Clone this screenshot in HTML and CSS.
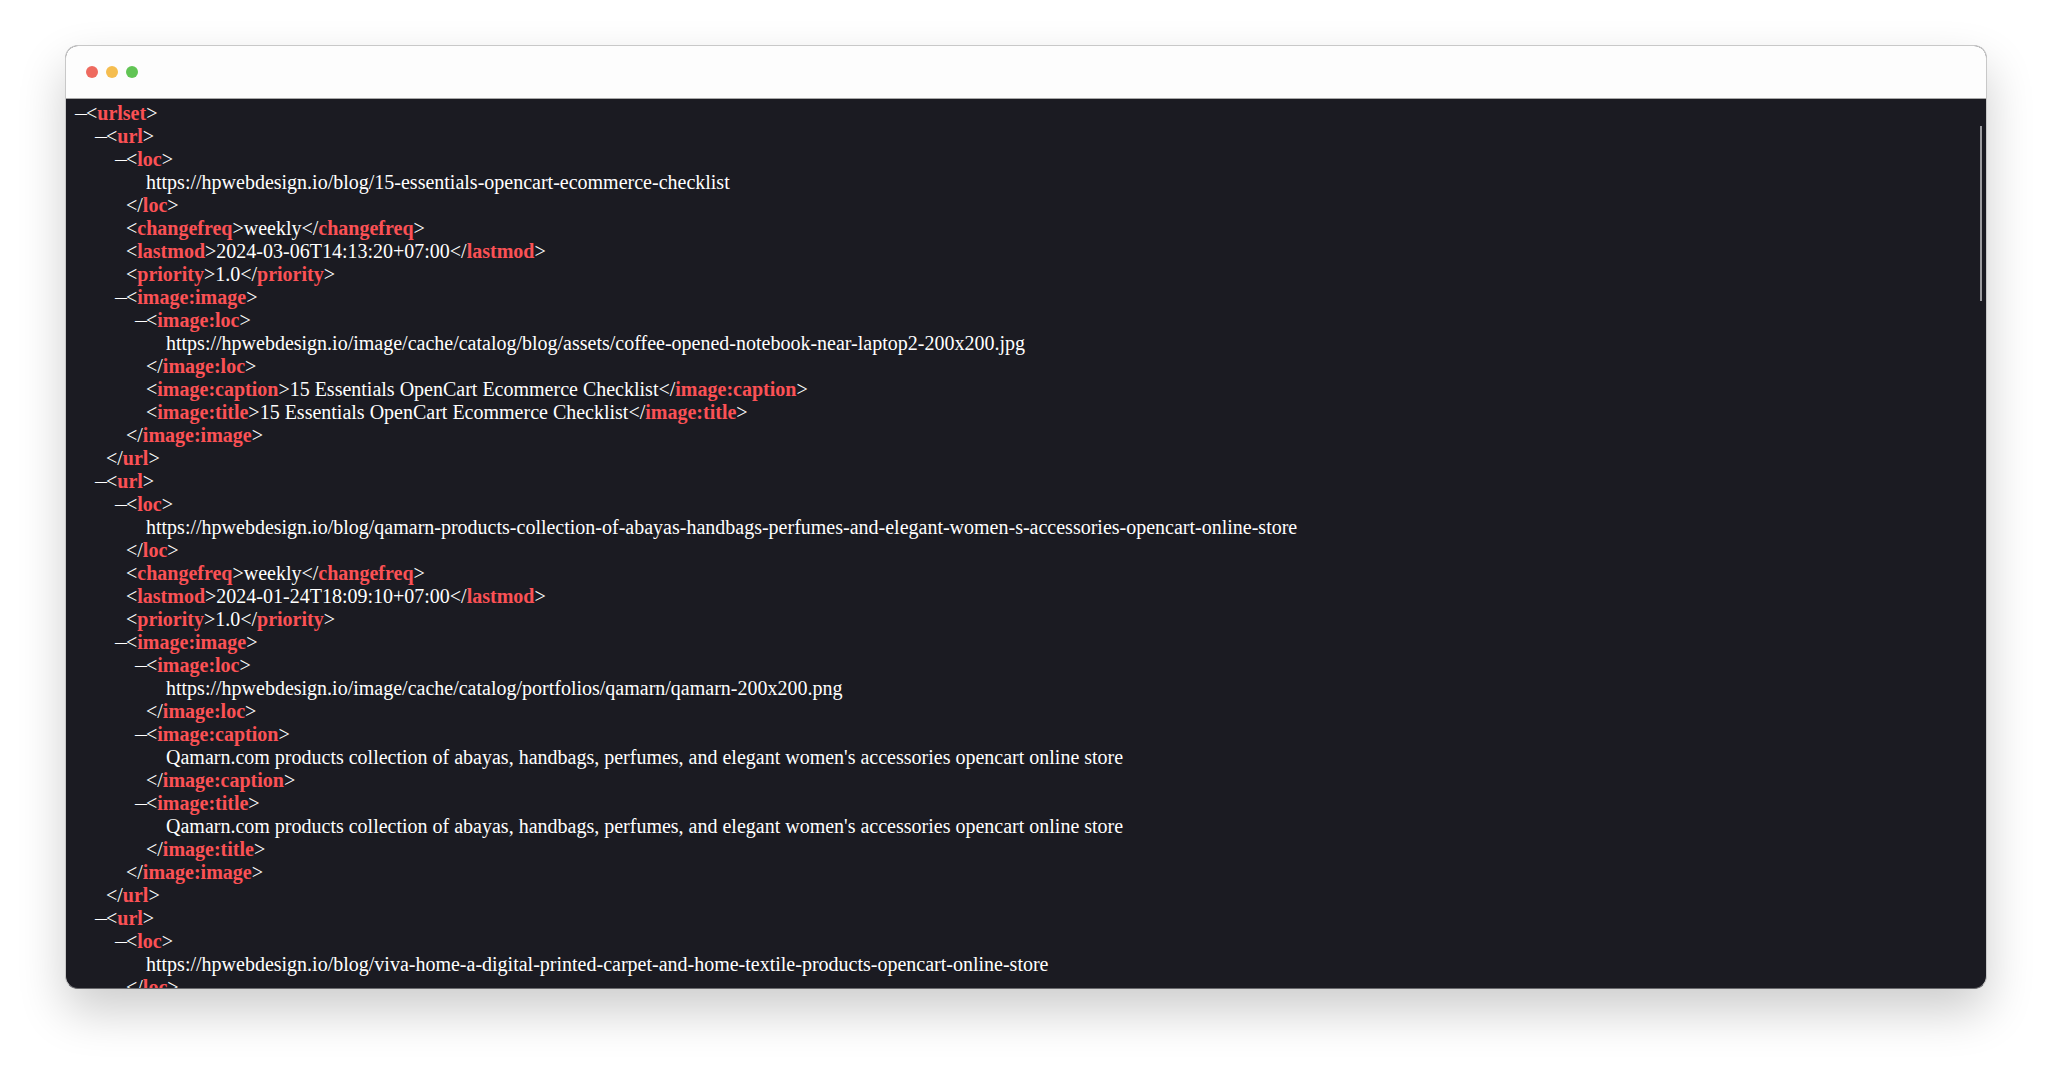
FILE: index.html
```html
<!DOCTYPE html>
<html lang="en">
<head>
<meta charset="utf-8">
<title>sitemap.xml</title>
<link rel="stylesheet" href="styles.css">
</head>
<body>
<main class="window">
  <header class="titlebar">
    <span class="dot dot-red"></span>
    <span class="dot dot-yellow"></span>
    <span class="dot dot-green"></span>
  </header>
  <section class="viewer">
    <div class="node">
      <div class="row"><span class="fold">—</span>&lt;<b>urlset</b>&gt;</div>

      <div class="node">
        <div class="row"><span class="fold">—</span>&lt;<b>url</b>&gt;</div>
        <div class="node">
          <div class="row"><span class="fold">—</span>&lt;<b>loc</b>&gt;</div>
          <div class="value">https://hpwebdesign.io/blog/15-essentials-opencart-ecommerce-checklist</div>
          <div class="row">&lt;/<b>loc</b>&gt;</div>
        </div>
        <div class="node"><div class="row">&lt;<b>changefreq</b>&gt;weekly&lt;/<b>changefreq</b>&gt;</div></div>
        <div class="node"><div class="row">&lt;<b>lastmod</b>&gt;2024-03-06T14:13:20+07:00&lt;/<b>lastmod</b>&gt;</div></div>
        <div class="node"><div class="row">&lt;<b>priority</b>&gt;1.0&lt;/<b>priority</b>&gt;</div></div>
        <div class="node">
          <div class="row"><span class="fold">—</span>&lt;<b>image:image</b>&gt;</div>
          <div class="node">
            <div class="row"><span class="fold">—</span>&lt;<b>image:loc</b>&gt;</div>
            <div class="value">https://hpwebdesign.io/image/cache/catalog/blog/assets/coffee-opened-notebook-near-laptop2-200x200.jpg</div>
            <div class="row">&lt;/<b>image:loc</b>&gt;</div>
          </div>
          <div class="node"><div class="row">&lt;<b>image:caption</b>&gt;15 Essentials OpenCart Ecommerce Checklist&lt;/<b>image:caption</b>&gt;</div></div>
          <div class="node"><div class="row">&lt;<b>image:title</b>&gt;15 Essentials OpenCart Ecommerce Checklist&lt;/<b>image:title</b>&gt;</div></div>
          <div class="row">&lt;/<b>image:image</b>&gt;</div>
        </div>
        <div class="row">&lt;/<b>url</b>&gt;</div>
      </div>

      <div class="node">
        <div class="row"><span class="fold">—</span>&lt;<b>url</b>&gt;</div>
        <div class="node">
          <div class="row"><span class="fold">—</span>&lt;<b>loc</b>&gt;</div>
          <div class="value">https://hpwebdesign.io/blog/qamarn-products-collection-of-abayas-handbags-perfumes-and-elegant-women-s-accessories-opencart-online-store</div>
          <div class="row">&lt;/<b>loc</b>&gt;</div>
        </div>
        <div class="node"><div class="row">&lt;<b>changefreq</b>&gt;weekly&lt;/<b>changefreq</b>&gt;</div></div>
        <div class="node"><div class="row">&lt;<b>lastmod</b>&gt;2024-01-24T18:09:10+07:00&lt;/<b>lastmod</b>&gt;</div></div>
        <div class="node"><div class="row">&lt;<b>priority</b>&gt;1.0&lt;/<b>priority</b>&gt;</div></div>
        <div class="node">
          <div class="row"><span class="fold">—</span>&lt;<b>image:image</b>&gt;</div>
          <div class="node">
            <div class="row"><span class="fold">—</span>&lt;<b>image:loc</b>&gt;</div>
            <div class="value">https://hpwebdesign.io/image/cache/catalog/portfolios/qamarn/qamarn-200x200.png</div>
            <div class="row">&lt;/<b>image:loc</b>&gt;</div>
          </div>
          <div class="node">
            <div class="row"><span class="fold">—</span>&lt;<b>image:caption</b>&gt;</div>
            <div class="value">Qamarn.com products collection of abayas, handbags, perfumes, and elegant women's accessories opencart online store</div>
            <div class="row">&lt;/<b>image:caption</b>&gt;</div>
          </div>
          <div class="node">
            <div class="row"><span class="fold">—</span>&lt;<b>image:title</b>&gt;</div>
            <div class="value">Qamarn.com products collection of abayas, handbags, perfumes, and elegant women's accessories opencart online store</div>
            <div class="row">&lt;/<b>image:title</b>&gt;</div>
          </div>
          <div class="row">&lt;/<b>image:image</b>&gt;</div>
        </div>
        <div class="row">&lt;/<b>url</b>&gt;</div>
      </div>

      <div class="node">
        <div class="row"><span class="fold">—</span>&lt;<b>url</b>&gt;</div>
        <div class="node">
          <div class="row"><span class="fold">—</span>&lt;<b>loc</b>&gt;</div>
          <div class="value">https://hpwebdesign.io/blog/viva-home-a-digital-printed-carpet-and-home-textile-products-opencart-online-store</div>
          <div class="row">&lt;/<b>loc</b>&gt;</div>
        </div>
      </div>
    </div>
    <div class="scrollbar"></div>
  </section>
</main>
</body>
</html>
```
FILE: styles.css
```css
* {
  box-sizing: border-box;
}

html,
body {
  margin: 0;
  height: 100%;
  background: #ffffff;
  overflow: hidden;
}

body {
  padding: 45px 65px 0;
}

.window {
  display: flex;
  flex-direction: column;
  width: 1922px;
  height: 944px;
  border: 1px solid #c8c8c8;
  border-bottom-color: #6a6a6e;
  border-radius: 13px;
  overflow: hidden;
  background: #1b1b22;
  box-shadow: 0 22px 48px rgba(0, 0, 0, 0.2);
}

.titlebar {
  display: flex;
  flex: none;
  align-items: center;
  gap: 8px;
  height: 53px;
  padding-left: 20px;
  background: #fdfdfd;
  border-bottom: 1px solid #a8a8a8;
}

.dot {
  width: 12px;
  height: 12px;
  border-radius: 50%;
}

.dot-red {
  background: #ee6a5f;
}

.dot-yellow {
  background: #f5bd4f;
}

.dot-green {
  background: #61c454;
}

.viewer {
  position: relative;
  flex: 1;
  min-height: 0;
  padding-top: 3px;
  overflow: hidden;
  color: #ffffff;
  font-family: "Liberation Serif", "Times New Roman", serif;
  font-size: 20px;
  line-height: 23px;
  white-space: nowrap;
}

.node {
  margin-left: 20px;
}

.row {
  height: 23px;
}

.value {
  height: 23px;
  margin-left: 20px;
}

.row b {
  color: #fb5155;
  font-weight: 700;
}

.fold {
  display: inline-block;
  width: 11px;
  margin-left: -11px;
  font-size: 12px;
  font-weight: 700;
  line-height: 12px;
  vertical-align: 3px;
}

.scrollbar {
  position: absolute;
  top: 27px;
  right: 4px;
  width: 2px;
  height: 175px;
  background: #9b9b9f;
}
```
